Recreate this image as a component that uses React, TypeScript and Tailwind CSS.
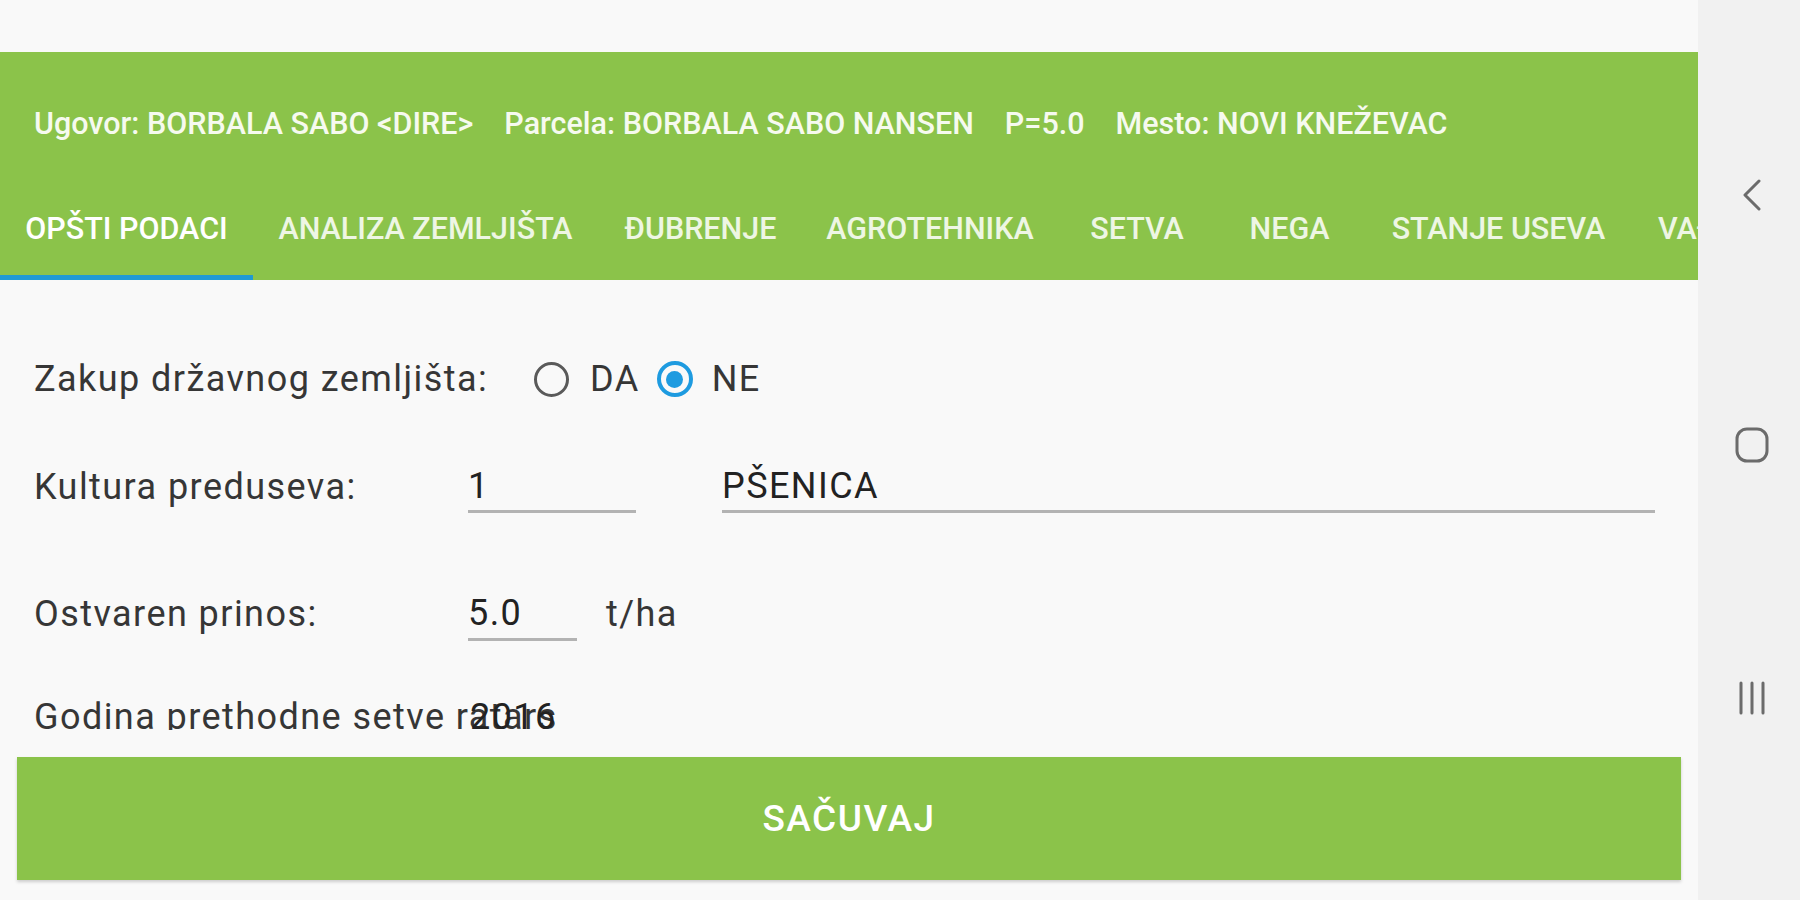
const tabs = [
  { label: "OPŠTI PODACI", w: "w-[253px]", active: true },
  { label: "ANALIZA ZEMLJIŠTA", w: "w-[345px]" },
  { label: "ĐUBRENJE", w: "w-[205px]" },
  { label: "AGROTEHNIKA", w: "w-[254px]" },
  { label: "SETVA", w: "w-[160px]" },
  { label: "NEGA", w: "w-[145px]" },
  { label: "STANJE USEVA", w: "w-[273px]" },
  { label: "VAĐENJE", w: "w-[178px]" },
];

function Radio({ checked }: { checked?: boolean }) {
  if (checked) {
    return (
      <span className="flex items-center justify-center w-[36px] h-[36px] rounded-full border-[4px] border-[#1e9be0]">
        <span className="w-[17px] h-[17px] rounded-full bg-[#1e9be0]" />
      </span>
    );
  }
  return <span className="w-[35px] h-[35px] rounded-full border-[3px] border-[#5a5a5a]" />;
}

export default function App() {
  return (
    <main className="flex w-[1800px] h-[900px] overflow-hidden bg-[#f9f9f9] text-[#333] font-['Roboto',sans-serif]">
      <div className="flex flex-col w-[1698px]">
        <div className="h-[52px]" />

        <header className="flex flex-col h-[228px] bg-[#8bc34a] text-[#f6faef]">
          <div className="flex items-center h-[144px] pl-[34px] gap-[31px] text-[30.5px] font-medium whitespace-nowrap">
            <span>Ugovor: BORBALA SABO &lt;DIRE&gt;</span>
            <span>Parcela: BORBALA SABO NANSEN</span>
            <span>P=5.0</span>
            <span>Mesto: NOVI KNEŽEVAC</span>
          </div>
          <nav className="flex h-[84px] overflow-hidden">
            {tabs.map((t) => (
              <div key={t.label} className={`${t.w} shrink-0 flex flex-col`}>
                <span
                  className={`pt-[18px] leading-[30px] text-[30.5px] font-medium whitespace-nowrap text-center ${
                    t.active ? "text-white" : "text-[#eef6e4]"
                  }`}
                >
                  {t.label}
                </span>
                {t.active && <div className="mt-auto h-[5px] bg-[#1f9ad2]" />}
              </div>
            ))}
          </nav>
        </header>

        <section className="flex flex-col flex-1">
          <div className="h-[450px] overflow-hidden pl-[34px] pt-[69px] text-[36px] tracking-[0.04em] text-[#363636]">
            <div className="flex items-center h-[60px]">
              <span className="w-[500px]">Zakup državnog zemljišta:</span>
              <Radio />
              <span className="ml-[21px] mr-[17px]">DA</span>
              <Radio checked />
              <span className="ml-[19px]">NE</span>
            </div>

            <div className="flex items-center h-[60px] mt-[48px]">
              <span className="w-[434px]">Kultura preduseva:</span>
              <div className="flex items-center w-[168px] h-[52px] border-b-[3px] border-[#b3b3b3] text-[#222]">1</div>
              <div className="flex items-center w-[933px] h-[52px] ml-[86px] border-b-[3px] border-[#b3b3b3] text-[#222]">
                PŠENICA
              </div>
            </div>

            <div className="flex items-center h-[60px] mt-[67px]">
              <span className="w-[434px]">Ostvaren prinos:</span>
              <div className="flex items-center w-[109px] h-[54px] border-b-[3px] border-[#b3b3b3] text-[#222]">5.0</div>
              <span className="ml-[29px]">t/ha</span>
            </div>

            <div className="grid h-[60px] mt-[43px] items-center">
              <span className="col-start-1 row-start-1 w-[521px] overflow-hidden whitespace-nowrap">
                Godina prethodne setve ratarske kulture:
              </span>
              <span className="col-start-1 row-start-1 ml-[436px] text-[#222]">2016</span>
            </div>
          </div>

          <div className="pt-[27px] px-[17px]">
            <button className="flex items-center justify-center w-full h-[123px] bg-[#8bc34a] shadow-[0_2px_3px_rgba(0,0,0,0.18)] text-white text-[37px] tracking-[0.04em] font-medium">
              SAČUVAJ
            </button>
          </div>
        </section>
      </div>

      <aside className="flex flex-col items-center w-[102px] pl-[6px] pt-[179px] bg-[#f1f1f1]">
        <svg width="22" height="32" viewBox="0 0 22 32" fill="none" stroke="#6b6b6b" strokeWidth="3" strokeLinecap="round" strokeLinejoin="round">
          <polyline points="18,2 4,16 18,30" />
        </svg>
        <svg className="mt-[216px]" width="34" height="36" viewBox="0 0 34 36" fill="none" stroke="#6b6b6b" strokeWidth="3">
          <rect x="2" y="2" width="30" height="32" rx="10" />
        </svg>
        <svg className="mt-[217px]" width="34" height="36" viewBox="0 0 34 36" fill="none" stroke="#6b6b6b" strokeWidth="3" strokeLinecap="round">
          <line x1="6" y1="3" x2="6" y2="33" />
          <line x1="17" y1="3" x2="17" y2="33" />
          <line x1="28" y1="3" x2="28" y2="33" />
        </svg>
      </aside>
    </main>
  );
}
